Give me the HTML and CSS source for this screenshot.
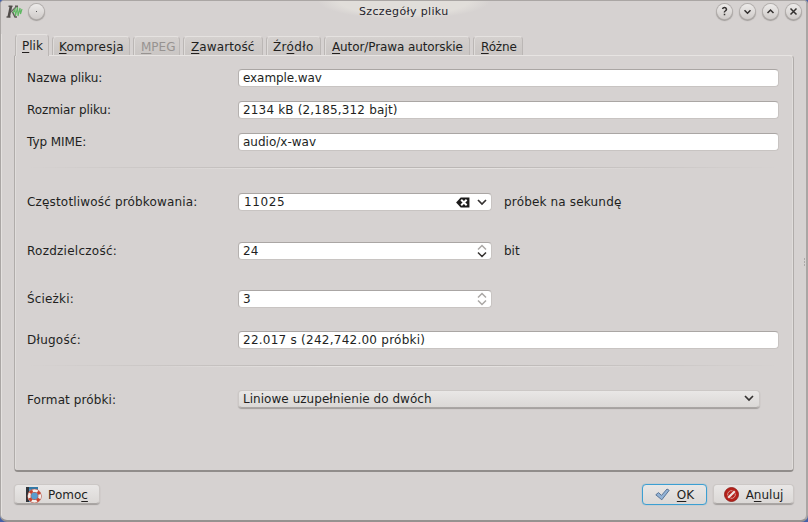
FILE: index.html
```html
<!DOCTYPE html>
<html lang="pl">
<head>
<meta charset="utf-8">
<title>Szczegóły pliku</title>
<link rel="stylesheet" href="styles.css">
</head>
<body>
<div class="window">
  <header class="titlebar">
    <svg class="app-icon" width="17" height="14" viewBox="0 0 17 14"><path d="M2.5 1.2h4M.5 12h4M6.5 7l2.5 5h2M9 1.2h3" fill="none" stroke="#5c5855" stroke-width="1.4"/><path d="M5 1 2.7 12" stroke="#504c49" stroke-width="2.6"/><path d="M10.5 1.5 5 7" stroke="#6c6865" stroke-width="1.5"/><path d="M7 8l2-4 .5 7 2-9 .5 9 2-8 .5 6 1.5-5" fill="none" stroke="#5fb862" stroke-width="1.1"/></svg>
    <span class="round menu-dot"><svg width="15" height="15"><path d="M7 7h1v1H7z" fill="#555"/></svg></span>
    <h1>Szczegóły pliku</h1>
    <div class="controls">
      <span class="round"><svg width="15" height="15"><path d="M5.5 5Q6 3.5 7.5 3.5T9.5 5.2Q9.5 6.2 8.3 7T7.5 8.5M7.5 9.7v1.5"/></svg></span>
      <span class="round"><svg width="15" height="15"><path d="M4.5 6.3l3 3 3-3"/></svg></span>
      <span class="round"><svg width="15" height="15"><path d="M4.5 9l3-3 3 3"/></svg></span>
      <span class="round"><svg width="15" height="15"><path d="M4.5 4.5l6 6M10.5 4.5l-6 6"/></svg></span>
    </div>
  </header>
  <nav class="tabs">
    <span class="tab active w-plik"><span><u>P</u>lik</span></span>
    <span class="tab w-kompresja"><span><u>K</u>ompresja</span></span>
    <span class="tab disabled w-mpeg"><span><u>M</u>PEG</span></span>
    <span class="tab w-zawartosc"><span><u>Z</u>awartość</span></span>
    <span class="tab w-zrodlo"><span>Źr<u>ó</u>dło</span></span>
    <span class="tab w-autor"><span><u>A</u>utor/Prawa autorskie</span></span>
    <span class="tab w-rozne"><span><u>R</u>óżne</span></span>
  </nav>
  <main class="panel">
    <label class="tight">Nazwa pliku:</label><div class="field tight">example.wav</div>
    <label class="tight">Rozmiar pliku:</label><div class="field wide">2134 kB (2,185,312 bajt)</div>
    <label class="tight">Typ MIME:</label><div class="field">audio/x-wav</div>
    <div class="rule"></div>
    <label class="wide">Częstotliwość próbkowania:</label>
    <div class="group"><div class="field short combo"><span class="number">11025</span>
      <svg class="clear" width="14" height="11" viewBox="0 0 15 12"><path d="M0 6 5 .5h9.5v11H5z" fill="#1c1b1b"/><path d="M5.5 3l6 6M11.5 3l-6 6" stroke="#fff" stroke-width="2.2"/></svg>
      <svg class="arrow" width="10" height="7"><path d="M1 1l4 4 4-4"/></svg></div><span class="wide">próbek na sekundę</span></div>
    <label class="looser">Rozdzielczość:</label>
    <div class="group"><div class="field short"><span>24</span>
      <svg class="spin" width="10" height="14"><path class="off" d="M1 5.5l4-4 4 4"/><path d="M1 8.5l4 4 4-4"/></svg></div><span>bit</span></div>
    <label class="wide">Ścieżki:</label>
    <div class="group"><div class="field short"><span>3</span>
      <svg class="spin" width="10" height="14"><path class="off" d="M1 5.5l4-4 4 4M1 8.5l4 4 4-4"/></svg></div></div>
    <label class="looser">Długość:</label><div class="field looser">22.017 s (242,742.00 próbki)</div>
    <div class="rule"></div>
    <label class="format loose">Format próbki:</label>
    <div class="select"><span>Liniowe uzupełnienie do dwóch</span><svg class="arrow" width="10" height="7"><path d="M1 1l4 4 4-4"/></svg></div>
  </main>
  <footer class="actions">
    <button class="help"><svg width="16" height="16" viewBox="0 0 16 16"><path d="M0 0h12v15H0z" fill="#4994c5"/><path d="M0 0h3v15H0z" fill="#30343a"/><path d="M3 0h9v2H3z" fill="#3279a7"/><circle cx="8.5" cy="9" r="5.3" fill="#5b9dce" stroke="#b04a3c" stroke-width="3.8"/><circle cx="8.5" cy="9" r="5.3" fill="none" stroke="#f3eeea" stroke-width="2.8"/><circle cx="8.5" cy="9" r="5.3" fill="none" stroke="#c8432f" stroke-width="2.8" stroke-dasharray="3.2 5.125" stroke-dashoffset="-2.6"/></svg><span>Pomo<u>c</u></span></button>
    <button class="ok"><svg width="15" height="13" viewBox="0 0 15 13"><path d="M.8 6.8 3.5 4.6l3 2.8L12 1l2.2 1.3L6.8 11.8z" fill="#93b3d6" stroke="#5a7596"/></svg><span><u>O</u>K</span></button>
    <button class="cancel"><svg width="15" height="15" viewBox="0 0 15 15"><circle cx="7.5" cy="7.5" r="7" fill="#b7211a" stroke="#8a1712" stroke-width=".8"/><path d="M3.8 8.5A3.8 3.8 0 0 1 8.5 3.8M6.5 11.2A3.8 3.8 0 0 0 11.2 6.5" fill="none" stroke="#cfa39c" stroke-width="1"/><path d="M4.2 10.8l6.6-6.6" stroke="#eee5e2" stroke-width="2.2"/></svg><span>A<u>n</u>uluj</span></button>
  </footer>
  <svg class="grip" width="2" height="9"><path d="M0 1h1M0 4h1M0 7h1" stroke="#858280"/></svg>
</div>
</body>
</html>
```
FILE: styles.css
```css
* { box-sizing: border-box; }
body { margin: 0; background: #4560a8; font: 12px/16px "DejaVu Sans", sans-serif; color: #221f1e; }
.window { position: relative; width: 808px; height: 522px; background: #d6d2d1; border: 1px solid #aaa6a4; border-bottom: 2px solid #969290; border-right: 2px solid #aaa6a4; border-radius: 4px 4px 7px 7px; box-shadow: inset 1px 1px #e4e1df; overflow: hidden; }
.titlebar { height: 33px; display: flex; align-items: flex-start; padding: 3px 5px 0 5px; background: radial-gradient(ellipse 86px 18px at 403px 0, #e1deda 0 75%, #d6d2d1 100%); }
.app-icon { margin-top: 1px; }
.round { width: 15px; height: 15px; border-radius: 50%; background: linear-gradient(#edebea, #cfcbc9); box-shadow: 0 0 0 1px #b3afad, 0 1px 1px 1px #a19d9b; }
.round svg { display: block; fill: none; stroke: #33302f; stroke-width: 1.5; }
.menu-dot { margin-left: 6px; }
.menu-dot svg { stroke: none; }
h1 { margin: 0 0 0 315px; font-size: 11px; font-weight: 400; line-height: 15px; letter-spacing: .35px; white-space: nowrap; color: #1f1d2c; }
.controls { display: flex; gap: 8px; margin-left: auto; }
.tabs { height: 21px; padding-left: 14px; display: flex; align-items: flex-end; }
.tab { height: 19px; margin-right: 3px; padding: 2px 0 0 6px; border: 1px solid #bbb7b5; border-top-color: #e5e2e0; border-bottom: 0; border-radius: 4px 4px 0 0; background: linear-gradient(#d4d0ce, #cac6c4); white-space: nowrap; box-shadow: inset 1px 0 #dfdcda; }
.tab.active { height: 22px; margin-bottom: -1px; padding-top: 3px; background: #d6d2d1; position: relative; }
.disabled { color: #979391; }
.w-plik { width: 34px; }
.w-kompresja { width: 78px; letter-spacing: .2px; }
.w-mpeg { width: 47px; padding-left: 7px; }
.w-zawartosc { width: 80px; padding-left: 7px; letter-spacing: .1px; }
.w-zrodlo { width: 55px; letter-spacing: .35px; }
.w-autor { width: 146px; padding-left: 7px; letter-spacing: -.1px; }
.w-rozne { width: 50px; padding-left: 7px; letter-spacing: -.15px; }
u { text-decoration-thickness: 1px; text-underline-offset: 2px; text-decoration-skip-ink: none; }
.tight { letter-spacing: -.08px; }
.loose { letter-spacing: .1px; }
.wide { letter-spacing: .17px; }
.looser { letter-spacing: .25px; }
.panel { margin-left: 13px; width: 780px; height: 417px; padding: 6px 14px 0 12px; border: 1px solid #b0acaa; border-top-color: #e7e4e2; border-bottom: 2px solid #918d8b; border-radius: 0 4px 4px 4px; box-shadow: inset 1px 0 #e0dddb, inset -1px 0 #e0dddb; display: grid; grid-template-columns: 211px 541px; grid-template-rows: 32px 32px 32px 20px 48px 49px 48px 34px 18px 48px; align-items: center; white-space: nowrap; }
.format { padding-top: 2px; }
.field { height: 18px; line-height: 16px; background: #fff; border: 1px solid #c8c4c2; border-top-color: #aaa6a4; border-left-color: #b5b1af; border-radius: 4px; padding-left: 4px; }
.short { width: 254px; display: flex; align-items: center; padding-right: 4px; }
.short span { margin-right: auto; }
.combo { padding-left: 5px; }
.number { letter-spacing: .6px; }
.clear { margin-right: 7px; }
.arrow, .spin { fill: none; stroke: #353231; stroke-width: 1.7; }
.spin { stroke-width: 1.5; }
.spin .off { stroke: #aaa7a5; }
.group { display: flex; align-items: center; gap: 12px; }
.rule { grid-column: 1 / -1; height: 2px; background: linear-gradient(90deg, transparent, #bbb7b5 40%, #bbb7b5 60%, transparent) 0 0 / 100% 1px no-repeat, linear-gradient(90deg, transparent 15%, #e6e3e1 40%, #e6e3e1 60%, transparent 85%) 0 1px / 100% 1px no-repeat; }
.select { width: 522px; height: 18px; display: flex; align-items: center; justify-content: space-between; padding: 0 5px 1px 4px; line-height: 16px; }
.select, button { background: linear-gradient(#e9e7e6, #dbd8d6); border: 1px solid #ccc8c6; border-bottom-color: #aaa6a4; border-radius: 4px; box-shadow: 0 1px 1px #a19d9b; }
.select span { letter-spacing: .04px; }
.actions { display: flex; padding: 12px 12px 0 13px; }
button { height: 20px; padding: 1px 0 0; display: flex; align-items: center; justify-content: center; font: inherit; color: inherit; }
.help { width: 86px; gap: 6px; }
.ok { margin-left: auto; width: 65px; height: 21px; padding-top: 0; gap: 7px; border-color: #3c9fd2; box-shadow: 0 0 1px #3c9fd2; }
.cancel { margin-left: 6px; width: 81px; gap: 7px; }
.grip { position: absolute; right: 0; top: 257px; }
```
